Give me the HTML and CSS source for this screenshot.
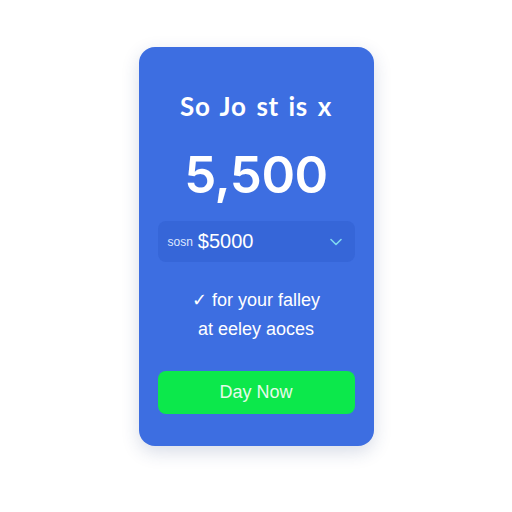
FILE: index.html
```html
<!DOCTYPE html>
<html>
	<head>
		<meta charset="utf-8">
		<title>Plan</title>
		<link rel="stylesheet" href="styles.css">
	</head>
	<body>
		<div class="page">
			<div class="card">
				<h1 class="title">So Jo st is x</h1>
				<div class="price">5,500</div>
				<div class="select">
					<span class="select-label">sosn</span>
					<span class="select-value">$5000</span>
					<svg class="chevron" width="12" height="8" viewBox="0 0 12 8">
						<path d="M1 1.5 L6 6.5 L11 1.5" fill="none" stroke="#7fd8ef" stroke-width="1.6" stroke-linecap="round" stroke-linejoin="round"/>
					</svg>
				</div>
				<p class="note">&#10003; for your falley</p>
				<p class="note">at eeley aoces</p>
				<button class="buy" type="button">Day Now</button>
			</div>
		</div>
	</body>
</html>
```
FILE: styles.css
```css
body {
	margin: 0;
	background-color: #ffffff;
	font-family: "Liberation Sans", Arial, sans-serif;
}

.page {
	width: 512px;
	height: 512px;
	display: flex;
	justify-content: center;
	padding-top: 47px;
	box-sizing: border-box;
}

.card {
	width: 235px;
	height: 399px;
	box-sizing: border-box;
	padding: 0 19px;
	background-color: #3d6ee1;
	border-radius: 16px;
	box-shadow: 0 6px 18px rgba(40, 60, 120, 0.18);
	display: flex;
	flex-direction: column;
	align-items: center;
	color: #ffffff;
}

.title {
	margin: 44px 0 0 0;
	font-family: "Lato", sans-serif;
	font-size: 26px;
	font-weight: 700;
	line-height: 30px;
	letter-spacing: 0.6px;
	word-spacing: 3px;
}

.price {
	margin-top: 22px;
	font-family: "Inter", sans-serif;
	font-size: 51px;
	font-weight: 600;
	line-height: 64px;
	letter-spacing: -0.5px;
}

.select {
	margin-top: 14px;
	width: 100%;
	height: 41px;
	box-sizing: border-box;
	padding: 0 10px;
	background-color: #3666d8;
	border-radius: 8px;
	display: flex;
	align-items: center;
}

.select-label {
	font-size: 12px;
	color: #dfe8ff;
	margin-right: 5px;
}

.select-value {
	font-size: 20px;
	flex: 1;
}

.chevron {
	margin-right: 3px;
}

.note {
	margin: 0;
	font-size: 18px;
	line-height: 29px;
}

.note:first-of-type {
	margin-top: 24px;
}

.buy {
	margin-top: 27px;
	width: 100%;
	height: 43px;
	border: none;
	border-radius: 8px;
	background-color: #0ce84b;
	color: #e6fbe9;
	font-family: "Liberation Sans", Arial, sans-serif;
	font-size: 18px;
	cursor: pointer;
}
```
